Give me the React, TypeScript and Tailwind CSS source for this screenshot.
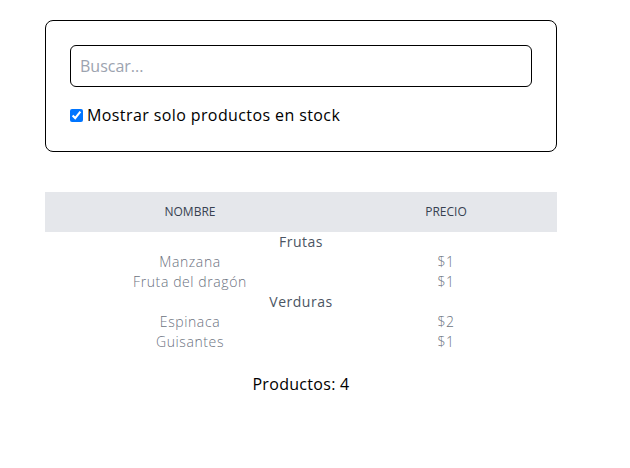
import { useState, Fragment } from 'react';

type Product = { category: string; price: string; stocked: boolean; name: string };

const PRODUCTS: Product[] = [
  { category: 'Frutas', price: '$1', stocked: true, name: 'Manzana' },
  { category: 'Frutas', price: '$1', stocked: true, name: 'Fruta del dragón' },
  { category: 'Frutas', price: '$2', stocked: false, name: 'Maracuyá' },
  { category: 'Verduras', price: '$2', stocked: true, name: 'Espinaca' },
  { category: 'Verduras', price: '$4', stocked: false, name: 'Calabaza' },
  { category: 'Verduras', price: '$1', stocked: true, name: 'Guisantes' },
];

export default function App() {
  const [query, setQuery] = useState('');
  const [inStockOnly, setInStockOnly] = useState(true);

  const visible = PRODUCTS.filter(
    (p) => (!inStockOnly || p.stocked) && p.name.toLowerCase().includes(query.toLowerCase())
  );
  const categories = Array.from(new Set(visible.map((p) => p.category)));

  return (
    <div className="min-h-screen bg-white font-['Open_Sans',sans-serif] text-black">
      <div className="w-[512px] ml-[45px] pt-5">
        {/* Search */}
        <div className="border border-black rounded-lg px-6 pt-6 pb-6">
          <input
            type="text"
            value={query}
            onChange={(e) => setQuery(e.target.value)}
            placeholder="Buscar..."
            className="w-full h-[42px] border border-black rounded-md px-[9px] text-base placeholder:text-[#9ca3af] outline-none"
          />
          <label className="flex items-center gap-1 mt-4 text-base leading-6 tracking-[0.4px]">
            <input
              type="checkbox"
              checked={inStockOnly}
              onChange={(e) => setInStockOnly(e.target.checked)}
              className="w-[13px] h-[13px] m-0"
            />
            Mostrar solo productos en stock
          </label>
        </div>

        {/* Table */}
        <table className="w-full mt-10 border-collapse">
          <thead className="bg-[#e5e7eb]">
            <tr>
              <th className="w-[290px] py-3 text-xs leading-4 font-medium uppercase text-[#374151]">Nombre</th>
              <th className="py-3 text-xs leading-4 font-medium uppercase text-[#374151]">Precio</th>
            </tr>
          </thead>
          <tbody>
            {categories.map((cat) => (
              <Fragment key={cat}>
                <tr>
                  <th colSpan={2} className="text-sm leading-5 font-medium tracking-[0.5px] text-[#4b5563]">{cat}</th>
                </tr>
                {visible
                  .filter((p) => p.category === cat)
                  .map((p) => (
                    <tr key={p.name}>
                      <td className="text-center text-sm leading-5 font-light tracking-[0.6px] text-[#6b7280]">{p.name}</td>
                      <td className="text-center text-sm leading-5 font-light tracking-[0.6px] text-[#6b7280]">{p.price}</td>
                    </tr>
                  ))}
              </Fragment>
            ))}
          </tbody>
        </table>

        <p className="mt-5 text-center text-base leading-6 tracking-[0.3px]">Productos: {visible.length}</p>
      </div>
    </div>
  );
}
